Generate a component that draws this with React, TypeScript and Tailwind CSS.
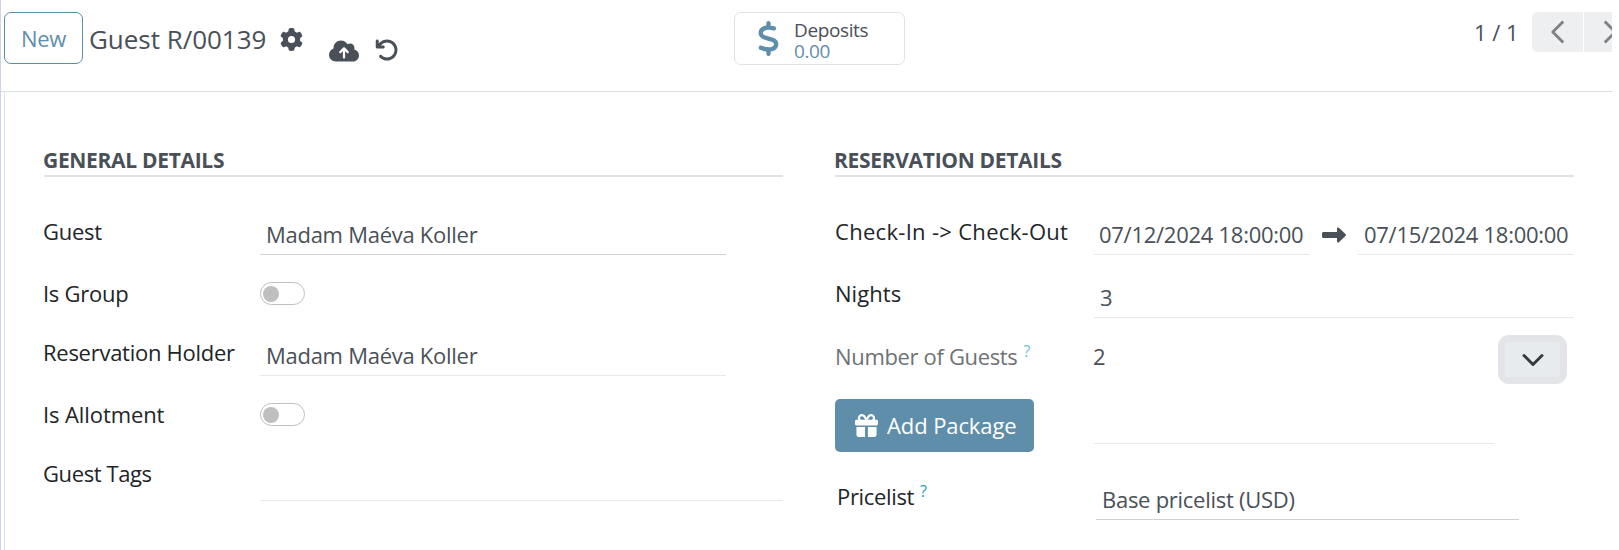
import React from 'react';
import { ChevronDown, ChevronLeft, ChevronRight } from 'lucide-react';
import {
  FaArrowRotateLeft,
  FaCloudArrowUp,
  FaDollarSign,
  FaGear,
  FaGift,
  FaRightLong,
} from 'react-icons/fa6';

interface RowProps {
  label: React.ReactNode;
  className?: string;
  labelClassName?: string;
  children?: React.ReactNode;
}

const Row: React.FC<RowProps> = ({ label, className = '', labelClassName = '', children }) => (
  <div className={`flex items-start ${className}`}>
    <div className={`shrink-0 whitespace-nowrap text-[#212529] ${labelClassName}`}>{label}</div>
    {children}
  </div>
);

interface FieldProps {
  className?: string;
  children?: React.ReactNode;
}

const Field: React.FC<FieldProps> = ({ className = '', children }) => (
  <div className={`flex shrink-0 items-end whitespace-nowrap border-b pb-2 text-[#495057] ${className}`}>
    {children}
  </div>
);

const Toggle = () => (
  <button className="mt-[12px] flex h-[23px] w-[45px] items-center rounded-full border border-[#bfbfbf] pl-[2px]">
    <span className="size-4 rounded-full bg-[#bfbfbf]" />
  </button>
);

const SectionTitle: React.FC<{ children: React.ReactNode }> = ({ children }) => (
  <h2 className="h-[29px] whitespace-nowrap border-b-2 border-[#e2e2e2] text-[21px] font-bold leading-6 tracking-[-0.31px] text-[#495057]">
    <span className="-ml-px">{children}</span>
  </h2>
);

const Header = () => (
  <header className="flex h-[92px] w-[1611px] items-start overflow-hidden border-b border-[#dee0e4] pl-[3px] pt-3">
    <button className="h-[52px] w-[79px] shrink-0 rounded-[7px] border border-[#5f8eaa] text-[22px] text-[#5f8eaa]">
      New
    </button>
    <h1 className="ml-1.5 mt-[11px] w-[176px] shrink-0 whitespace-nowrap text-[26px] leading-8 tracking-[-0.03px] text-[#495057]">
      Guest R/00139
    </h1>
    <FaGear className="ml-[15px] mt-4 shrink-0 text-[#495057]" size={23} />
    <FaCloudArrowUp className="ml-[26px] mt-6 shrink-0 text-[#495057]" size={30} />
    <FaArrowRotateLeft className="ml-4 mt-[26px] shrink-0 text-[#495057]" size={24} />
    <button className="ml-[335px] flex h-[53px] w-[171px] shrink-0 items-center rounded-[7px] border border-[#dee2e6] text-left">
      <FaDollarSign className="ml-4 shrink-0 text-[#5f8eaa]" size={35} />
      <span className="ml-2 flex flex-col pt-1 text-[19px] leading-[21px] tracking-[-0.38px]">
        <span className="text-[#495057]">Deposits</span>
        <span className="text-[#5f8eaa]">0.00</span>
      </span>
    </button>
    <span className="ml-[569px] mt-2 w-[58px] shrink-0 whitespace-nowrap tracking-normal text-[#495057]">
      1 / 1
    </span>
    <div className="flex shrink-0 gap-px">
      <button className="flex h-10 w-[51px] items-center justify-center rounded-l-[6px] bg-[#eeeff1] text-[#808080]">
        <ChevronLeft size={42} strokeWidth={1.6} strokeLinecap="butt" />
      </button>
      <button className="flex h-10 w-[51px] items-center justify-center bg-[#eeeff1] text-[#808080]">
        <ChevronRight size={42} strokeWidth={1.6} strokeLinecap="butt" />
      </button>
    </div>
  </header>
);

const GeneralDetails = () => (
  <section className="w-[739px] shrink-0">
    <SectionTitle>GENERAL DETAILS</SectionTitle>
    <div className="-ml-px pt-8">
      <Row label="Guest" className="h-[61px]" labelClassName="w-[217px] pt-2.5">
        <Field className="h-[46px] w-[466px] border-[#ced4da] pl-1.5">Madam Maéva Koller</Field>
      </Row>
      <Row label="Is Group" className="h-[60px]" labelClassName="w-[217px] pt-[11px]">
        <Toggle />
      </Row>
      <Row label="Reservation Holder" className="h-[61px]" labelClassName="w-[217px] pt-2.5">
        <Field className="h-[46px] w-[466px] border-[#e7e9ed] pl-1.5">Madam Maéva Koller</Field>
      </Row>
      <Row label="Is Allotment" className="h-[60px]" labelClassName="w-[217px] pt-[11px] tracking-[-0.1px]">
        <Toggle />
      </Row>
      <Row label="Guest Tags" labelClassName="w-[217px] pt-2.5 tracking-[-0.4px]">
        <Field className="mt-1 h-[46px] w-[523px] border-[#e7e9ed]" />
      </Row>
    </div>
  </section>
);

const ReservationDetails = () => (
  <section className="w-[739px] shrink-0">
    <SectionTitle>RESERVATION DETAILS</SectionTitle>
    <div className="pt-8">
      <Row
        label="Check-In -> Check-Out"
        className="h-[63px]"
        labelClassName="w-[259px] pt-2.5 tracking-[0.3px]"
      >
        <Field className="h-[46px] w-[216px] border-[#e7e9ed] pl-[5px]">07/12/2024 18:00:00</Field>
        <FaRightLong className="ml-3 mt-[14px] shrink-0 text-[#495057]" size={24} />
        <Field className="ml-3 h-[46px] w-[216px] border-[#e7e9ed] pl-[6px]">07/15/2024 18:00:00</Field>
      </Row>
      <Row label="Nights" className="h-[62px]" labelClassName="w-[259px] pt-[9px] tracking-[0.05px]">
        <Field className="h-[46px] w-[480px] border-[#e7e9ed] pl-[6px]">3</Field>
      </Row>
      <Row
        label={
          <span className="flex tracking-[-0.34px] text-[#6f7275]">
            Number of Guests
            <span className="-mt-[5px] ml-1.5 text-[16px] text-[#6fc4cf]">?</span>
          </span>
        }
        className="h-[65px]"
        labelClassName="w-[259px] pt-2.5"
      >
        <span className="-ml-px w-[412px] pt-2.5 text-[#495057]">2</span>
        <button className="mt-2 flex h-[35px] w-[55px] items-center justify-center rounded-[4px] bg-[#e7ebee] text-[#343a40] outline-[7px] outline-[#e2e4e8]">
          <ChevronDown size={36} strokeWidth={2} />
        </button>
      </Row>
      <Row
        label={
          <button className="flex h-[53px] w-[199px] items-center rounded-[5px] bg-[#5f8eaa] pl-5 text-white">
            <FaGift size={23} />
            <span className="-mt-0.5 ml-[9px] tracking-[-0.1px]">Add Package</span>
          </button>
        }
        className="h-[75px]"
        labelClassName="w-[259px]"
      >
        <Field className="h-[45px] w-[400px] border-[#e7e9ed]" />
      </Row>
      <Row
        label={
          <span className="flex tracking-[-0.34px]">
            Pricelist
            <span className="-mt-[5px] ml-1.5 text-[16px] text-[#17a2b8]">?</span>
          </span>
        }
        className="pl-[2px]"
        labelClassName="w-[259px] pt-2.5"
      >
        <Field className="h-[46px] w-[423px] border-[#ced0d4] pl-[6px]">Base pricelist (USD)</Field>
      </Row>
    </div>
  </section>
);

export default function App() {
  return (
    <div className="flex h-[550px] w-[1619px] flex-col overflow-hidden border-l border-[#ccd4ea] bg-white font-['Open_Sans','Noto_Sans',sans-serif] text-[22px] leading-6 tracking-[-0.27px]">
      <Header />
      <main className="ml-[3px] flex flex-1 gap-[52px] border-l border-[#dee2e6] pl-[39px] pt-[56px]">
        <GeneralDetails />
        <ReservationDetails />
      </main>
    </div>
  );
}
